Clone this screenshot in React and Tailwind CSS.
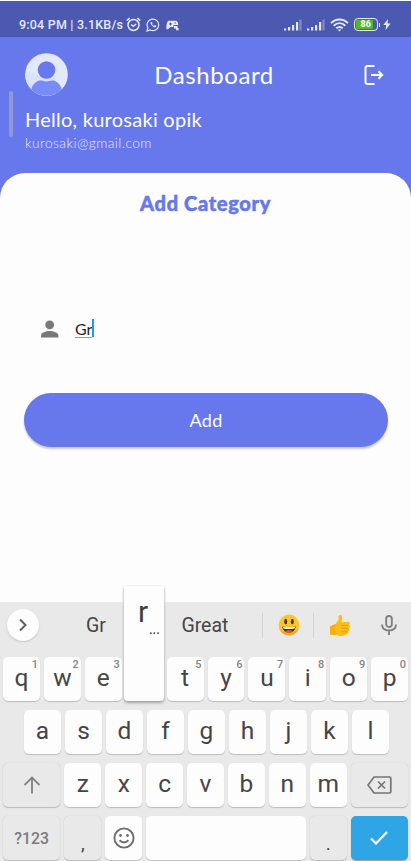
import React from "react";

const roboto = "font-['Roboto','Noto_Sans',sans-serif]";
const lato = "font-['Lato','Open_Sans',sans-serif]";

function Signal() {
  return (
    <svg width="18" height="12" viewBox="0 0 18 12" fill="#e6e9f8">
      <rect x="0" y="9.5" width="2.2" height="2" />
      <rect x="4" y="8" width="2.2" height="3.5" />
      <rect x="8" y="6" width="2.2" height="5.5" />
      <rect x="12" y="3" width="2.2" height="8.5" />
      <rect x="15.4" y="0.5" width="2.2" height="11" opacity="0.35" />
    </svg>
  );
}

function StatusBar() {
  return (
    <div className={`h-9 bg-[#4b59b0] flex items-start text-[#e6e9f8] pl-[19px] pr-[20px] pt-[15px] ${roboto}`}>
      <span className="w-[104px] text-[12.5px] leading-[17px] font-medium tracking-[0.2px] whitespace-nowrap">9:04 PM | 3.1KB/s</span>
      <svg className="ml-[3px] mt-px" width="15" height="15" viewBox="0 0 15 15" fill="none" stroke="#e6e9f8" strokeWidth="1.5">
        <circle cx="7.5" cy="8" r="5.5" />
        <path d="M.8 3.6 3.7 1.2M14.2 3.6 11.3 1.2M5 7.5l2.3 1.9L10.2 7" />
      </svg>
      <svg className="ml-[5px] mt-[2px]" width="14" height="14" viewBox="0 0 14 14" fill="none" stroke="#e6e9f8" strokeWidth="1.2">
        <path d="M1 13l.9-3.2A5.8 5.8 0 1 1 4.2 12z" />
        <path d="M4.7 4.2c-.9 1.6 2.5 5.5 4.7 5 .8-.2 1-1.2.8-1.4L8.8 7l-.9.9C6.900 7.500 6.300 6.800 6 6l.6-.8-.6-1.300z" fill="#e6e9f8" stroke="none" />
      </svg>
      <svg className="ml-[6px] mt-[4px]" width="14" height="11" viewBox="0 0 14 11" fill="#e6e9f8">
        <path d="M3 .8h6.500c2 0 2.600 2 2.800 4.200H7.500v2H4.500L2 9.300C.3 9.600.200 8 .4 6.400.7 3.500 1.300.8 3 .8z" />
        <path d="M3 4h3M4.500 2.500v3M8.500 3H10" stroke="#4b59b0" />
        <path d="M8 6h3.500v2.500H8zM10 8h2.600v2.300H10z" />
      </svg>
      <div className="flex ml-auto">
        <div className="mt-[3px] flex gap-[5px]">
          <Signal />
          <Signal />
        </div>
        <svg className="ml-[5px] mt-[2px]" width="19" height="14" viewBox="0 0 19 14" fill="none" stroke="#e6e9f8" strokeWidth="1.9">
          <path d="M1 5.100C6 .2 13 .2 18 5.100M3.700 7.700c3.500-3.200 8.100-3.200 11.600 0M6.300 10.300c2-1.700 4.400-1.700 6.400 0" />
          <path d="M7.700 11.500h3.600L9.500 13.600z" fill="#e6e9f8" stroke="none" />
        </svg>
        <div className="ml-[5px] mt-[2px] w-6 h-[12.5px] rounded-[4px] border-[1.5px] border-[#e6e9f8] p-px flex">
          <div className="relative w-[17px] h-full bg-[#52b926] rounded-[1px]">
            <span className="absolute left-[4.500px] top-[-1px] text-[9px] leading-[10px] font-bold text-white">86</span>
          </div>
        </div>
        <div className="ml-px mt-[7px] w-px h-1 bg-[#e6e9f8]" />
        <svg className="ml-[3px] mt-[3px]" width="8" height="11" viewBox="0 0 8 11" fill="#e6e9f8">
          <path d="M5 0 .3 6h2.900L2.600 11 7.600 4.600H4.500z" />
        </svg>
      </div>
    </div>
  );
}

function Header() {
  return (
    <div className="h-[135.500px] relative">
      <div className="flex items-start pt-4 pl-[25px] pr-[26px]">
        <svg width="43" height="43" viewBox="0 0 43 43">
          <defs>
            <clipPath id="avatar"><circle cx="21.500" cy="21.500" r="21.300" /></clipPath>
          </defs>
          <g clipPath="url(#avatar)">
            <rect width="43" height="43" fill="#e3e9fd" />
            <path d="M0 20c8-4 9 3 18 2s10-2 13 3v18H0z" fill="#dae3fd" />
            <circle cx="21.500" cy="17" r="8.800" fill="#6878ef" />
            <path d="M6 37c2-7 6-9.500 10-9.500 3 0 3 1 5.500 1s2.500-1 5.500-1c4 0 8 2.500 10 9.500l-6 6H12z" fill="#788bfa" />
          </g>
        </svg>
        <h1 className={`${lato} flex-1 pr-[4px] text-center text-white text-[24px] leading-[43px] tracking-[0.600px]`}>Dashboard</h1>
        <svg className="mt-[12px]" width="21" height="21" viewBox="0 0 21 21" fill="none" stroke="#fff" strokeWidth="2">
          <path d="M10.500 1H3.500Q1.500 1 1.500 3v14q0 2 2 2h7M7 10h11M14.500 6.300 18.200 10l-3.700 3.700" />
        </svg>
      </div>
      <div className={`${lato} pl-[25px] text-white whitespace-nowrap`}>
        <p className="mt-[11px] text-[20px] leading-6 tracking-[0.260px]">Hello, kurosaki opik</p>
        <p className="mt-[2px] text-[13.800px] leading-5 font-light tracking-[0.420px] text-[#e6e9fc]">kurosaki@gmail.com</p>
      </div>
      <div className="absolute left-[8.500px] top-[54px] w-[4px] h-[46px] rounded-full bg-[#8f98d9]" />
    </div>
  );
}

const keyBase = "h-[44px] rounded-[5px] relative flex items-center justify-center text-[#454545]";
const light = "bg-[#fdfdfd] shadow-[0_1px_1px_#bdbdbd]";
const dark = "bg-[#e9e9e9] shadow-[0_1px_1px_#b9b9b9,0_0_1px_#c6c6c6]";

function Letter({ label, digit }) {
  return (
    <div className={`${keyBase} ${light} w-[37px]`}>
      <span className="text-[24.500px] leading-none -mt-[1px]">{label}</span>
      {digit && <span className="absolute right-[2px] top-[2px] text-[11px] leading-[12px] font-medium text-[#858585]">{digit}</span>}
    </div>
  );
}

function Grin() {
  return (
    <svg width="22" height="22" viewBox="0 0 22 22">
      <circle cx="11" cy="11" r="10.400" fill="#fcc62b" />
      <path d="M1 14a10.400 10.400 0 0 0 20 0c-4 6-16 6-20 0z" fill="#f6a81c" />
      <ellipse cx="7.700" cy="7.500" rx="1.500" ry="2.700" fill="#4b3413" />
      <ellipse cx="14.300" cy="7.500" rx="1.500" ry="2.700" fill="#4b3413" />
      <path d="M4.200 12.500q6.800 1.600 13.600 0-.8 6-6.800 6t-6.800-6z" fill="#4b2a14" />
      <path d="M4.800 12.700q6.200 1.300 12.400 0l-.5 1.900q-5.700 1-11.400 0z" fill="#fff" />
      <path d="M7 17.200q4-2.600 8 0-4 2.300-8 0z" fill="#ef4d3e" />
    </svg>
  );
}

function Thumb() {
  return (
    <svg width="22" height="23" viewBox="0 0 22 23">
      <path d="M1 12.500 6.500 10 9.500 6V2.500Q9.700.8 11.500 1c2 .3 2 3.500 1 7.300l6.800-.5c2 .1 2.100 2.600.6 3.100 1.600.5 1.500 2.900-.1 3.400 1.200.6.900 2.700-.5 3.100.8 1-.1 2.400-1.300 2.600C14 22.800 10 22.500 7 20.800L1 20.500z" fill="#fbbd19" />
      <path d="M12 11.500h7.500M12.500 14.600h7M12.500 17.700h6.300" stroke="#ed9b10" strokeWidth=".9" />
      <path d="M1 12.500 6.500 10c-1 4 0 8 1 11L1 20.500z" fill="#f8ae12" />
    </svg>
  );
}

function Suggestions() {
  return (
    <div className="h-[46px] flex items-center text-[19.500px] text-[#454545]">
      <div className="ml-[7px] w-8 h-8 rounded-full bg-[#fdfdfd] shadow-[0_1px_2px_#c4c4c4] flex items-center justify-center">
        <svg width="12" height="14" viewBox="0 0 12 14" fill="none" stroke="#606060" strokeWidth="2"><path d="m3 1.500 5.500 5.500L3 12.500" /></svg>
      </div>
      <span className="ml-[47px] w-[95.500px] mt-[2px]">Gr</span>
      <span className="w-[80.500px] mt-[2px] tracking-[-0.050px]">Great</span>
      <div className="w-px h-[25px] bg-[#d3d3d3]" />
      <div className="ml-[14.500px]"><Grin /></div>
      <div className="ml-[13px] w-px h-[25px] bg-[#d3d3d3]" />
      <div className="ml-[15px]"><Thumb /></div>
      <svg className="ml-[30px]" width="16" height="22" viewBox="0 0 16 22" fill="none" stroke="#808080" strokeWidth="1.900">
        <rect x="5.200" y="2" width="5.600" height="11" rx="2.800" />
        <path d="M1 10.500c.3 4 3 6 7 6s6.700-2 7-6M8 16.500V21" />
      </svg>
    </div>
  );
}

function Keyboard() {
  const top = ["q", "w", "e", "r", "t", "y", "u", "i", "o", "p"];
  const home = ["a", "s", "d", "f", "g", "h", "j", "k", "l"];
  const low = ["z", "x", "c", "v", "b", "n", "m"];
  return (
    <div className={`relative h-[259px] shrink-0 bg-[#e9e9e9] ${roboto}`}>
      <div className="h-[55px]"><Suggestions /></div>
      <div className="flex flex-col gap-[9px] px-[3px]">
        <div className="flex gap-1">
          {top.map((k, i) => <Letter key={k} label={k} digit={String((i + 1) % 10)} />)}
        </div>
        <div className="flex gap-1 pl-[21px]">
          {home.map((k) => <Letter key={k} label={k} />)}
        </div>
        <div className="flex gap-1">
          <div className={`${keyBase} ${dark} w-[57.500px]`}>
            <svg width="18" height="18" viewBox="0 0 18 18" fill="none" stroke="#858585" strokeWidth="1.900"><path d="M9 17.500V2M1.500 9 9 1.500 16.500 9" /></svg>
          </div>
          {low.map((k) => <Letter key={k} label={k} />)}
          <div className={`${keyBase} ${dark} w-[57.500px]`}>
            <svg width="25" height="18" viewBox="0 0 25 18" fill="none" stroke="#757575" strokeWidth="1.700">
              <path d="M7 1h15.500q1.300 0 1.300 1.300v13.400q0 1.300-1.300 1.300H7L1 9zM11 5.500l7 7M18 5.500l-7 7" />
            </svg>
          </div>
        </div>
        <div className="flex gap-1">
          <div className={`${keyBase} ${dark} w-[57.500px] text-[15.800px] font-medium !text-[#7b7b7b] pt-px`}>?123</div>
          <div className={`${keyBase} ${dark} w-[37px] text-[19px] pt-[13px]`}>,</div>
          <div className={`${keyBase} ${light} w-[37px]`}>
            <svg width="22" height="22" viewBox="0 0 22 22" fill="none" stroke="#6e6e6e" strokeWidth="1.900">
              <circle cx="11" cy="11" r="9.600" />
              <path d="M6.500 13.300q4.500 4.300 9 0" />
              <circle cx="7.500" cy="8.500" r="1.400" fill="#6e6e6e" stroke="none" />
              <circle cx="14.500" cy="8.500" r="1.400" fill="#6e6e6e" stroke="none" />
            </svg>
          </div>
          <div className={`${keyBase} ${light} w-[160px]`} />
          <div className={`${keyBase} ${dark} w-[37px] text-[19px] pt-[13px]`}>.</div>
          <div className={`${keyBase} w-[57.500px] bg-[#2ea5e5] shadow-[0_1px_1px_#999]`}>
            <svg width="18" height="14" viewBox="0 0 18 14" fill="none" stroke="#fff" strokeWidth="2.200"><path d="m1 7.500 5 5L17 1" /></svg>
          </div>
        </div>
      </div>
      <div className="absolute left-[124px] -top-[16px] w-[40px] h-[115px] bg-[#fdfdfd] rounded-b-[4px] shadow-[0_2px_3px_#a4a4a4,0_0_1px_#c0c0c0] text-[#3f3f3f]">
        <span className="absolute left-[14px] top-[9px] text-[30px] leading-[34px]">r</span>
        <span className="absolute left-[25px] top-[37px] text-[13px] leading-[14px] font-medium">...</span>
      </div>
    </div>
  );
}

export default function App() {
  return (
    <div className="w-[411px] h-[861px] overflow-hidden bg-[#6678ec] border-t border-[#fdfdfd] flex flex-col">
      <StatusBar />
      <Header />
      <main className={`flex-1 bg-[#fdfdfd] rounded-t-[25px] ${lato}`}>
        <h2 className="pt-[18px] text-center text-[20px] leading-6 font-black tracking-[0.650px] [-webkit-text-stroke:0.500px_#6678ec] text-[#6678ec]">Add Category</h2>
        <div className="mt-[102px] ml-[41px] h-6 flex items-center">
          <svg width="18" height="18" viewBox="0 0 18 18" fill="#797979">
            <circle cx="8.700" cy="4.800" r="4.400" />
            <path d="M0 17.500v-2c0-3 5-4.500 8.700-4.500s8.700 1.500 8.700 4.500v2z" />
          </svg>
          <span className="ml-4 -mt-px text-[16px] leading-[19px] text-[#252525] underline decoration-[#999] underline-offset-2">Gr</span>
          <span className="-mt-px w-[2px] h-[18px] bg-[#2196f3]" />
        </div>
        <button className="mt-[52px] ml-6 block w-[364px] h-[54px] pt-[2px] rounded-full bg-[#6678ec] text-white text-[18px] tracking-[0.300px] shadow-[0_2px_2px_#c9c9c9]">Add</button>
      </main>
      <Keyboard />
    </div>
  );
}
